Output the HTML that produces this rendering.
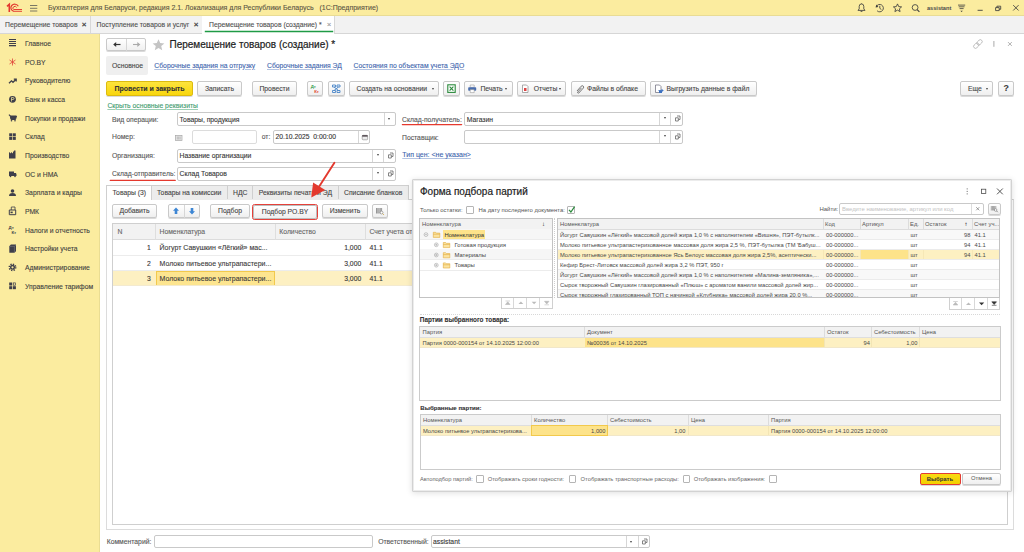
<!DOCTYPE html>
<html><head><meta charset="utf-8">
<style>
*{box-sizing:border-box;margin:0;padding:0}
html,body{width:1024px;height:552px;overflow:hidden;background:#fff;font-family:"Liberation Sans",sans-serif;color:#4d4d4d;-webkit-text-stroke-width:0.1px}
.a{position:absolute}
.t{position:absolute;white-space:nowrap;font-family:"Liberation Sans",sans-serif}
#top{left:0;top:0;width:1024px;height:16px;background:#fbec9f;border-bottom:1px solid #e9dc95}
#tabs{left:0;top:16px;width:1024px;height:18px;background:#f2f2f2;border-bottom:1px solid #d6d6d6}
#side{left:0;top:34px;width:100px;height:518px;background:#fbec9f}
.si{font-size:6.8px;color:#404040;left:25px;height:10px;line-height:10px}
.sic{position:absolute;left:9px}
.btn{position:absolute;border:1px solid #c9c9c9;border-radius:2px;background:linear-gradient(#fff,#efefef);box-shadow:0 1px 0 #dadada;font-size:6.8px;color:#444;text-align:center;white-space:nowrap}
.fld{position:absolute;border:1px solid #c9c9c9;border-radius:2px;background:#fff}
.lbl{font-size:6.8px;color:#555;height:10px;line-height:10px}
.lnk{color:#3b63ad;text-decoration:underline;text-decoration-color:#b4c4e2}
.dv{position:absolute;top:0;bottom:0;width:1px;background:#d6d6d6}
.dd{position:absolute;width:0;height:0;border-left:1.8px solid transparent;border-right:1.8px solid transparent;border-top:2.2px solid #444}
</style></head><body>
<!-- TOP BAR -->
<div id="top" class="a"></div>
<svg class="a" style="left:0;top:0" width="24" height="16" viewBox="0 0 24 16">
  <path d="M9.3 11.9 V4.3 L7 6.4" stroke="#e3382f" stroke-width="1.6" fill="none"/>
  <path d="M18.3 6.3 A3.9 3.6 0 1 0 13.8 11.3" stroke="#e3382f" stroke-width="1.2" fill="none"/>
  <path d="M16.6 7.4 A1.9 1.7 0 1 0 13.8 9.5" stroke="#e3382f" stroke-width="1" fill="none"/>
  <path d="M13.6 9.5 H22 M13.6 11.3 H22" stroke="#e3382f" stroke-width="0.95"/>
</svg>
<svg class="a" style="left:30px;top:5px" width="8" height="7" viewBox="0 0 8 7">
  <path d="M0 0.5H7.3M0 3.3H7.3M0 6H7.3" stroke="#6b6b5e" stroke-width="0.9"/>
</svg>
<div class="t" style="left:48px;top:3px;font-size:7px;line-height:10px;color:#5a5443">Бухгалтерия для Беларуси, редакция 2.1. Локализация для Республики Беларусь&nbsp;&nbsp;&nbsp;(1С:Предприятие)</div>
<!-- top right icons -->
<svg class="a" style="left:850px;top:0" width="174" height="16" viewBox="850 0 174 16">
 <g stroke="#3d3d3d" fill="none" stroke-width="0.85">
  <path d="M858 10.4 L859.2 8.9 V6.4 A2.3 2.5 0 0 1 863.8 6.4 V8.9 L865 10.4 Z"/><path d="M861.5 3.6 V4.1 M860.6 11.4 H862.4"/>
  <path d="M876.4 6.4 A3.7 3.7 0 1 1 877.1 10.8"/><path d="M879.8 5.8 V8.3 L881.4 9.6"/>
  <path d="M897.5 3.9 L898.7 6.6 L901.6 6.9 L899.4 8.8 L900.1 11.6 L897.5 10.1 L894.9 11.6 L895.6 8.8 L893.4 6.9 L896.3 6.6 Z"/>
  <circle cx="915.1" cy="7.5" r="2.9"/><path d="M917.2 9.6 L919.4 11.8" stroke-width="1.1"/>
  <path d="M958 5.1 H965.2 M958.7 6.8 H964.5 M959.6 8.6 H963.6" stroke-width="0.8"/>
  <path d="M977.6 10.3 H982.7" stroke-width="0.9"/>
  <path d="M995.6 7.6 H999.2 V10.6 H995.6 Z M996.9 7.6 V6.2 H1000.7 V9.3 H999.2"/>
  <path d="M1013.2 5.1 L1018.6 10.5 M1018.6 5.1 L1013.2 10.5"/>
 </g>
 <path d="M876.4 4.6 L875.6 7.4 L878.3 6.9 Z" fill="#3d3d3d"/>
 <path d="M960.4 10.8 H962.8 L961.6 12 Z" fill="#3d3d3d"/>
</svg>
<div class="t" style="left:927px;top:3px;font-size:5.6px;-webkit-text-stroke-width:0px;font-weight:700;line-height:10px;color:#4a4a4a">assistant</div>

<!-- TABS -->
<div id="tabs" class="a"></div>
<div class="a" style="left:90px;top:16px;width:1px;height:17px;background:#d8d8d8"></div>
<div class="a" style="left:202px;top:16px;width:1px;height:17px;background:#d8d8d8"></div>
<div class="a" style="left:202px;top:16px;width:133px;height:18px;background:#fff;border-right:1px solid #d8d8d8"></div>
<svg class="a" style="left:200px;top:28px" width="140" height="6" viewBox="200 28 140 6"><path d="M204.8 31.5 H333.2" stroke="#1f9a45" stroke-width="1.4"/></svg>
<div class="t" style="left:5px;top:20px;font-size:6.8px;line-height:10px;color:#4f4f4f">Перемещение товаров</div>
<div class="t" style="left:81.8px;top:19.8px;font-size:8px;font-weight:700;line-height:10px;color:#444">×</div>
<div class="t" style="left:96.5px;top:20px;font-size:6.8px;line-height:10px;color:#4f4f4f">Поступление товаров и услуг</div>
<div class="t" style="left:193.8px;top:19.8px;font-size:8px;font-weight:700;line-height:10px;color:#444">×</div>
<div class="t" style="left:209px;top:20px;font-size:6.8px;line-height:10px;color:#4f4f4f">Перемещение товаров (создание) *</div>
<div class="t" style="left:326.8px;top:19.8px;font-size:8px;line-height:10px;color:#999">×</div>

<!-- SIDEBAR -->
<div id="side" class="a"></div>
<div class="a" style="left:99px;top:34px;width:1px;height:518px;background:#eadd93"></div>
<div class="t si" style="top:39.1px">Главное</div>
<div class="t si" style="top:57.8px">РО.BY</div>
<div class="t si" style="top:76.4px">Руководителю</div>
<div class="t si" style="top:95.1px">Банк и касса</div>
<div class="t si" style="top:113.7px">Покупки и продажи</div>
<div class="t si" style="top:132.4px">Склад</div>
<div class="t si" style="top:151.0px">Производство</div>
<div class="t si" style="top:169.7px">ОС и НМА</div>
<div class="t si" style="top:188.3px">Зарплата и кадры</div>
<div class="t si" style="top:207.0px">РМК</div>
<div class="t si" style="top:225.6px">Налоги и отчетность</div>
<div class="t si" style="top:244.3px">Настройки учета</div>
<div class="t si" style="top:262.9px">Администрирование</div>
<div class="t si" style="top:281.6px">Управление тарифом</div>
<svg class="a" style="left:0;top:34px" width="100" height="260" viewBox="0 34 100 260">
 <g fill="#3f3f4a">
  <rect x="9" y="39" width="7" height="1"/><rect x="9" y="41" width="7" height="1"/><rect x="9" y="43" width="7" height="1"/><rect x="9" y="45" width="7" height="1.3"/>
 </g>
 <g stroke="#e0443a" stroke-width="0.8" fill="none"><path d="M12.5 58.5 V65.5 M9.5 60 L15.5 64 M15.5 60 L9.5 64"/></g>
 <path d="M9 83.3 L11.5 80.8 L13 82.3 L15.8 79.5 M13.8 79.2 H16.2 V81.6" stroke="#3f3f4a" stroke-width="1.3" fill="none"/>
 <circle cx="12.5" cy="99.3" r="3.4" fill="#3f3f4a"/><path d="M11.5 101.5 V97.5 H13 A1 1 0 0 1 13 99.5 H11.5" stroke="#fbec9f" stroke-width="0.7" fill="none"/>
 <path d="M8.8 115 H10 L11 119.5 H15.5 L16.5 116 H10.5" stroke="#3f3f4a" stroke-width="1" fill="#3f3f4a"/><circle cx="11.5" cy="120.8" r="0.8" fill="#3f3f4a"/><circle cx="15" cy="120.8" r="0.8" fill="#3f3f4a"/>
 <g fill="#3f3f4a"><rect x="9.2" y="133.3" width="3" height="3"/><rect x="12.8" y="133.3" width="3" height="3"/><rect x="9.2" y="136.9" width="3" height="3"/><rect x="12.8" y="136.9" width="3" height="3"/></g>
 <path d="M9 158.5 V152 L11 153.5 V152 L13 153.5 V151.5 H14 V150.5 H15.5 V158.5 Z" fill="#3f3f4a"/>
 <path d="M9 171.5 H14 V176 H9 Z M14 173 H16 L16.5 174.5 V176 H14 Z" fill="#3f3f4a"/><circle cx="10.5" cy="176.5" r="0.8" fill="#3f3f4a"/><circle cx="15" cy="176.5" r="0.8" fill="#3f3f4a"/>
 <circle cx="12.5" cy="191" r="1.8" fill="#3f3f4a"/><path d="M9 196 Q9 193 12.5 193 Q16 193 16 196 Z" fill="#3f3f4a"/>
 <path d="M9.3 210 H15.7 V214.7 H9.3 Z" stroke="#3f3f4a" stroke-width="1" fill="none"/><path d="M11.3 210 V207 H15 V210" stroke="#3f3f4a" stroke-width="0.8" fill="none"/><rect x="10.5" y="211.6" width="2.2" height="1.6" fill="#3f3f4a"/>
 <text x="8.6" y="229.3" font-size="4.4" font-family="Liberation Sans" fill="#3f3f4a" font-weight="700">Дт</text><text x="11.4" y="234" font-size="4.4" font-family="Liberation Sans" fill="#3f3f4a" font-weight="700">Кт</text>
 <path d="M9.3 246.2 L10.9 244.6 H16 V251.2 L14.4 252.8 H9.3 Z" fill="#3f3f4a"/><path d="M9.3 246.4 H14.4 V252.8 M14.4 246.4 L16 244.8" stroke="#8a8a8f" stroke-width="0.45" fill="none"/>
 <circle cx="12.5" cy="267.3" r="3.2" stroke="#3f3f4a" stroke-width="1.5" fill="none" stroke-dasharray="1.3 1.213"/><circle cx="12.5" cy="267.3" r="2.5" fill="#3f3f4a"/><circle cx="12.5" cy="267.3" r="1.1" fill="#fbec9f"/>
 <g fill="#3f3f4a"><rect x="9.2" y="282.5" width="3" height="3"/><rect x="9.2" y="286.2" width="3" height="3"/><rect x="12.9" y="286.2" width="3" height="3"/></g><rect x="13.3" y="282.9" width="2.3" height="2.3" stroke="#3f3f4a" stroke-width="0.7" fill="none"/>
</svg>

<!-- MAIN FORM HEADER -->
<div class="a" style="left:106px;top:38px;width:40px;height:13px;border:1px solid #c9c9c9;border-radius:2px;background:linear-gradient(#fff,#f0f0f0);box-shadow:0 1px 0 #dadada"></div>
<div class="a" style="left:126px;top:39px;width:1px;height:12px;background:#d6d6d6"></div>
<svg class="a" style="left:106px;top:38px" width="41" height="13" viewBox="0 0 41 13">
 <path d="M8 6.5 H14.5" stroke="#333" stroke-width="1.2"/><path d="M7.2 6.5 L10.2 4 V9 Z" fill="#333"/>
 <path d="M27 6.5 H33.5" stroke="#aaa" stroke-width="1.1"/><path d="M34.3 6.5 L31.3 4 V9 Z" fill="#aaa"/>
</svg>
<svg class="a" style="left:152px;top:38.5px" width="13" height="12" viewBox="0 0 13 12">
 <path d="M6.5 0.3 L8.2 4.1 L12.4 4.4 L9.2 7.1 L10.2 11.3 L6.5 9.1 L2.8 11.3 L3.8 7.1 L0.6 4.4 L4.8 4.1 Z" fill="#c4c4c4"/>
</svg>
<div class="t" style="left:169.5px;top:38.2px;font-size:10px;line-height:13px;color:#222;-webkit-text-stroke-width:0.2px">Перемещение товаров (создание) *</div>
<svg class="a" style="left:970px;top:39px" width="45" height="10" viewBox="0 0 45 10">
 <g stroke="#b5b5b5" stroke-width="0.9" fill="none">
  <g transform="rotate(-45 7.9 5)" stroke-width="0.85"><rect x="2.6" y="3.1" width="6" height="3.8" rx="1.9"/><rect x="7.2" y="3.1" width="6" height="3.8" rx="1.9"/></g>
  <path d="M38 3.1 L41.8 6.9 M41.8 3.1 L38 6.9" stroke="#a8a8a8"/>
 </g>
 <path d="M23.9 2 V7.8" stroke="#a5a5a5" stroke-width="0.95"/>
</svg>

<div class="a" style="left:106px;top:56px;width:42px;height:19px;background:#efefef;border-radius:2px"></div>
<div class="t" style="left:112px;top:60.5px;font-size:6.8px;line-height:10px;color:#444">Основное</div>
<div class="t lnk" style="left:154.3px;top:60.5px;font-size:6.8px;line-height:10px">Сборочные задания на отгрузку</div>
<div class="t lnk" style="left:267px;top:60.5px;font-size:6.8px;line-height:10px">Сборочные задания ЭД</div>
<div class="t lnk" style="left:353.5px;top:60.5px;font-size:6.8px;line-height:10px">Состояния по объектам учета ЭДО</div>

<!-- COMMAND BAR -->
<div class="btn" style="left:106px;top:81px;width:87px;height:15px;line-height:13.8px;background:linear-gradient(#fde43c,#f8d60e);border-color:#dcbb10;color:#333;font-weight:700;font-size:7px">Провести и закрыть</div>
<div class="btn" style="left:197px;top:81px;width:45px;height:15px;line-height:13.8px">Записать</div>
<div class="btn" style="left:252px;top:81px;width:45px;height:15px;line-height:13.8px">Провести</div>
<div class="btn" style="left:307px;top:81px;width:16px;height:15px"></div>
<div class="btn" style="left:328px;top:81px;width:17px;height:15px"></div>
<div class="btn" style="left:349px;top:81px;width:90px;height:15px;line-height:13.8px;text-align:left;padding-left:6.5px">Создать на основании</div>
<div class="dd" style="left:431.8px;top:88px"></div>
<div class="btn" style="left:443px;top:81px;width:17px;height:15px"></div>
<div class="btn" style="left:464px;top:81px;width:49px;height:15px;line-height:13.8px;text-align:left;padding-left:15.4px">Печать</div>
<div class="dd" style="left:505.2px;top:88px"></div>
<div class="btn" style="left:517px;top:81px;width:49px;height:15px;line-height:13.8px;text-align:left;padding-left:15.8px">Отчеты</div>
<div class="dd" style="left:559.3px;top:88px"></div>
<div class="btn" style="left:571px;top:81px;width:75px;height:15px;line-height:13.8px;text-align:left;padding-left:15px">Файлы в облаке</div>
<div class="btn" style="left:650px;top:81px;width:107px;height:15px;line-height:13.8px;text-align:left;padding-left:15.5px">Выгрузить данные в файл</div>
<div class="btn" style="left:960px;top:81px;width:33px;height:15px;line-height:13.8px;text-align:left;padding-left:7px">Еще</div>
<div class="dd" style="left:985.5px;top:88px"></div>
<div class="btn" style="left:998px;top:81px;width:16px;height:15px;line-height:13.6px;font-weight:700;font-size:8.8px;color:#3a3a3a;padding-left:0.5px">?</div>
<svg class="a" style="left:300px;top:81px" width="470" height="16" viewBox="300 81 470 16">
 <text x="310.8" y="88" font-size="4.3" font-family="Liberation Sans" font-weight="700" fill="#2e9a4c" stroke="none">Дт</text>
 <text x="314.2" y="92.6" font-size="4.3" font-family="Liberation Sans" font-weight="700" fill="#e03a2e" stroke="none">Кт</text>
 <g stroke="#4a86c8" stroke-width="0.9" fill="none"><path d="M332.5 85 H335.5 V87 H332.5 Z M337 85 H340 V87 H337 Z M332.5 90.5 H335.5 V92.5 H332.5 Z M337 90.5 H340 V92.5 H337 Z M334 87 L338.5 90.5 M338.5 87 L334 90.5"/></g>
 <rect x="447.8" y="84.8" width="7.4" height="7.6" fill="#fff" stroke="#2b8a3c" stroke-width="1.1"/>
 <path d="M449.6 86.6 L453.4 90.6 M453.4 86.6 L449.6 90.6" stroke="#2b8a3c" stroke-width="1.1"/>
 <path d="M470.2 85 H474.2 V87.3 H470.2 Z" fill="#fff" stroke="#888" stroke-width="0.5"/><rect x="468.2" y="87.2" width="8" height="3.6" rx="0.8" fill="#4a6eae"/><path d="M470.2 89.6 H474.2 V92.6 H470.2 Z" fill="#fff" stroke="#888" stroke-width="0.5"/>
 <path d="M522.5 85 H526.5 L528 86.5 V92.5 H522.5 Z" fill="#fff" stroke="#888" stroke-width="0.7"/><rect x="524" y="88" width="2.5" height="3" fill="#d44"/>
 <path d="M577 91 L581.2 86.2 A1.4 1.4 0 0 1 583.3 88.1 L578.8 93 A0.7 0.7 0 0 1 577.8 92 L581.5 87.8" stroke="#666" stroke-width="0.9" fill="none"/>
 <path d="M655.5 85 H659.5 L661 86.5 V92.5 H655.5 Z" fill="#fff" stroke="#667" stroke-width="0.7"/><path d="M658.5 90.5 H663 M661.5 89 L663 90.5 L661.5 92" stroke="#3a6fc0" stroke-width="0.9" fill="none"/><rect x="659" y="91" width="3" height="2" fill="#3a6fc0"/>
</svg>

<!-- HEADER FIELDS -->
<div class="t lnk" style="left:107.4px;top:100.7px;font-size:6.8px;line-height:10px;color:#3d9a6e;text-decoration-color:#9dcfb5">Скрыть основные реквизиты</div>
<div class="t lbl" style="left:112px;top:114.8px">Вид операции:</div>
<div class="fld" style="left:177px;top:112px;width:219px;height:14px"><div class="dv" style="left:206px"></div><div class="dd" style="left:210px;top:5px"></div></div>
<div class="t" style="left:179.5px;top:114.5px;font-size:6.8px;line-height:10px;color:#333">Товары, продукция</div>
<div class="t lbl" style="left:112px;top:132px">Номер:</div>
<svg class="a" style="left:175px;top:135px" width="8" height="6" viewBox="0 0 8 6"><rect x="0.4" y="0.4" width="6.6" height="5.2" fill="#e6e6e6" stroke="#a8a8a8" stroke-width="0.7"/><path d="M2.3 1.5 V4.5 M3.7 1.5 V4.5 M5.1 1.5 V4.5" stroke="#aaa" stroke-width="0.7"/></svg>
<div class="fld" style="left:192px;top:130px;width:65px;height:14px;border-color:#dcdcdc"></div>
<div class="t lbl" style="left:261.7px;top:132px">от:</div>
<div class="fld" style="left:273px;top:130px;width:97px;height:14px"><div class="dv" style="left:84px"></div><svg class="a" style="left:86.5px;top:2.5px" width="8" height="7" viewBox="0 0 8 7"><rect x="1.2" y="1.3" width="5.4" height="4.5" rx="0.9" fill="#ececec" stroke="#888" stroke-width="0.6"/><rect x="1.2" y="1.2" width="5.4" height="1.4" fill="#4a4046"/></svg></div>
<div class="t" style="left:275.5px;top:132px;font-size:6.8px;line-height:10px;color:#333">20.10.2025&nbsp;&nbsp;0:00:00</div>
<div class="t lbl" style="left:112px;top:150.5px">Организация:</div>
<div class="fld" style="left:177px;top:149px;width:219px;height:14px"><div class="dv" style="left:194px"></div><div class="dv" style="left:205px"></div><div class="dd" style="left:199px;top:4px"></div><svg class="a" style="left:208.5px;top:2px" width="7" height="7" viewBox="0 0 7 7"><path d="M3 1 H6 V4.5 H4.5" fill="none" stroke="#666" stroke-width="0.8"/><path d="M1.5 2.8 H4.3 V6 H1.5 Z" fill="none" stroke="#666" stroke-width="0.8"/></svg></div>
<div class="t" style="left:179.5px;top:150.5px;font-size:6.8px;line-height:10px;color:#333">Название организации</div>
<div class="t lbl" style="left:112px;top:168.5px">Склад-отправитель:</div>
<svg class="a" style="left:105px;top:176px" width="80" height="8" viewBox="105 176 80 8"><path d="M110.3 180.4 H175.2" stroke="#e5392e" stroke-width="1.35" stroke-linecap="round"/></svg>
<div class="fld" style="left:177px;top:167px;width:219px;height:14px"><div class="dv" style="left:194px"></div><div class="dv" style="left:205px"></div><div class="dd" style="left:199px;top:4px"></div><svg class="a" style="left:208.5px;top:2px" width="7" height="7" viewBox="0 0 7 7"><path d="M3 1 H6 V4.5 H4.5" fill="none" stroke="#666" stroke-width="0.8"/><path d="M1.5 2.8 H4.3 V6 H1.5 Z" fill="none" stroke="#666" stroke-width="0.8"/></svg></div>
<div class="t" style="left:179.5px;top:168.5px;font-size:6.8px;line-height:10px;color:#333">Склад Товаров</div>

<div class="t lbl" style="left:402px;top:114.6px">Склад-получатель:</div>
<svg class="a" style="left:398px;top:120px" width="70" height="8" viewBox="398 120 70 8"><path d="M402.4 124.6 H461.6" stroke="#e5392e" stroke-width="1.35" stroke-linecap="round"/></svg>
<div class="fld" style="left:464px;top:112px;width:219px;height:14px"><div class="dv" style="left:194px"></div><div class="dv" style="left:205px"></div><div class="dd" style="left:199px;top:4px"></div><svg class="a" style="left:209px;top:2px" width="7" height="7" viewBox="0 0 7 7"><path d="M3 1 H6 V4.5 H4.5" fill="none" stroke="#666" stroke-width="0.8"/><path d="M1.5 2.8 H4.3 V6 H1.5 Z" fill="none" stroke="#666" stroke-width="0.8"/></svg></div>
<div class="t" style="left:466.8px;top:114.5px;font-size:6.8px;line-height:10px;color:#333">Магазин</div>
<div class="t lbl" style="left:402px;top:132.8px">Поставщик:</div>
<div class="fld" style="left:464px;top:130px;width:219px;height:14px"><div class="dv" style="left:194px"></div><div class="dv" style="left:205px"></div><div class="dd" style="left:199px;top:4px"></div><svg class="a" style="left:209px;top:2px" width="7" height="7" viewBox="0 0 7 7"><path d="M3 1 H6 V4.5 H4.5" fill="none" stroke="#666" stroke-width="0.8"/><path d="M1.5 2.8 H4.3 V6 H1.5 Z" fill="none" stroke="#666" stroke-width="0.8"/></svg></div>
<div class="t lnk" style="left:402.3px;top:150px;font-size:7px;line-height:10px">Тип цен: &lt;не указан&gt;</div>

<!-- TABS PANEL -->
<div class="a" style="left:106px;top:199px;width:908px;height:331px;border:1px solid #dcdcdc;border-top:1px solid #cfcfcf"></div>
<div class="a" style="left:151px;top:185px;width:258px;height:15px;background:#ececec;border:1px solid #cfcfcf;border-bottom:none"></div>
<div class="a" style="left:227px;top:186px;width:1px;height:13px;background:#cfcfcf"></div>
<div class="a" style="left:252px;top:186px;width:1px;height:13px;background:#cfcfcf"></div>
<div class="a" style="left:338px;top:186px;width:1px;height:13px;background:#cfcfcf"></div>
<div class="a" style="left:106px;top:185px;width:46px;height:15px;background:#fff;border:1px solid #cfcfcf;border-bottom:none"></div>
<div class="t" style="left:112.5px;top:187.7px;font-size:6.8px;line-height:10px;color:#444">Товары (3)</div>
<div class="t" style="left:157px;top:187.7px;font-size:6.8px;line-height:10px;color:#444">Товары на комиссии</div>
<div class="t" style="left:233px;top:187.7px;font-size:6.8px;line-height:10px;color:#444">НДС</div>
<div class="t" style="left:258.7px;top:187.7px;font-size:6.8px;line-height:10px;color:#444">Реквизиты печати и ЭД</div>
<div class="t" style="left:344px;top:187.7px;font-size:6.8px;line-height:10px;color:#444">Списание бланков</div>

<div class="btn" style="left:112px;top:204px;width:45px;height:14px;line-height:11.3px">Добавить</div>
<div class="btn" style="left:168px;top:204px;width:32px;height:14px"></div>
<div class="a" style="left:184px;top:205px;width:1px;height:13px;background:#d6d6d6"></div>
<svg class="a" style="left:168px;top:204px" width="32" height="14" viewBox="0 0 32 14">
 <path d="M8 3.5 L11 6.8 H9.3 V10 H6.7 V6.8 H5 Z" fill="#3d86d4"/>
 <path d="M24 10.5 L27 7.2 H25.3 V4 H22.7 V7.2 H21 Z" fill="#3d86d4"/>
</svg>
<div class="btn" style="left:210px;top:204px;width:40px;height:14px;line-height:11.3px">Подбор</div>
<div class="btn" style="left:253px;top:205px;width:64px;height:14px;line-height:11.3px;border-color:#bdbdbd">Подбор РО.BY</div>
<div class="a" style="left:252px;top:204px;width:66px;height:16px;border:1.7px solid #e5413a;border-radius:2.5px"></div>
<div class="btn" style="left:322px;top:204px;width:46px;height:14px;line-height:11.3px">Изменить</div>
<div class="btn" style="left:372px;top:204px;width:16px;height:14px"></div>
<svg class="a" style="left:375px;top:207px" width="10" height="9" viewBox="0 0 10 9"><path d="M1.5 1 V6.5 M2.8 1 V6.5 M4 1 V6.5 M5.3 1 V6.5 M6.6 1 V4" stroke="#555" stroke-width="0.6"/><circle cx="6.6" cy="5.6" r="1.4" fill="#fff" stroke="#777" stroke-width="0.6"/><path d="M7.6 6.6 L8.8 7.8" stroke="#c9a23a" stroke-width="0.9"/></svg>

<!-- MAIN TABLE -->
<div class="a" style="left:112px;top:223px;width:896px;height:302px;border:1px solid #cfcfcf;background:#fff"></div>
<div class="a" style="left:113px;top:224px;width:894px;height:16px;background:#f2f2f2;border-bottom:1px solid #dcdcdc"></div>
<div class="a" style="left:155px;top:224px;width:1px;height:16px;background:#dedede"></div>
<div class="a" style="left:275px;top:224px;width:1px;height:16px;background:#dedede"></div>
<div class="a" style="left:365px;top:224px;width:1px;height:16px;background:#dedede"></div>
<div class="t" style="left:117.5px;top:226.8px;font-size:6.8px;line-height:10px;color:#666">N</div>
<div class="t" style="left:159.5px;top:226.8px;font-size:6.8px;line-height:10px;color:#666">Номенклатура</div>
<div class="t" style="left:279.3px;top:226.8px;font-size:6.8px;line-height:10px;color:#666">Количество</div>
<div class="t" style="left:369.5px;top:226.8px;font-size:6.8px;line-height:10px;color:#666">Счет учета от</div>
<div class="a" style="left:113px;top:255px;width:894px;height:1px;background:#ececec"></div>
<div class="a" style="left:113px;top:270px;width:894px;height:1px;background:#ececec"></div>
<div class="a" style="left:113px;top:271px;width:894px;height:14px;background:#fdf0c2"></div>
<div class="a" style="left:156px;top:271px;width:119px;height:15px;background:#fde58f;border:1px solid #f2c94c"></div>
<div class="a" style="left:113px;top:285px;width:894px;height:1px;background:#f3ead0"></div>
<div class="t" style="left:147px;top:243.1px;font-size:6.8px;line-height:10px;color:#333">1</div>
<div class="t" style="left:159.5px;top:243.1px;font-size:7px;line-height:10px;color:#3a3a3a">Йогурт Савушкин «Лёгкий» мас...</div>
<div class="t" style="left:344.2px;top:243.1px;font-size:6.8px;line-height:10px;color:#333">1,000</div>
<div class="t" style="left:369.5px;top:243.1px;font-size:6.8px;line-height:10px;color:#333">41.1</div>
<div class="t" style="left:147px;top:258.8px;font-size:6.8px;line-height:10px;color:#333">2</div>
<div class="t" style="left:159.5px;top:258.8px;font-size:7px;line-height:10px;color:#3a3a3a">Молоко питьевое ультрапастери...</div>
<div class="t" style="left:344.2px;top:258.8px;font-size:6.8px;line-height:10px;color:#333">3,000</div>
<div class="t" style="left:369.5px;top:258.8px;font-size:6.8px;line-height:10px;color:#333">41.1</div>
<div class="t" style="left:147px;top:274px;font-size:6.8px;line-height:10px;color:#333">3</div>
<div class="t" style="left:159.5px;top:274px;font-size:7px;line-height:10px;color:#3a3a3a">Молоко питьевое ультрапастери...</div>
<div class="t" style="left:344.2px;top:274px;font-size:6.8px;line-height:10px;color:#333">3,000</div>
<div class="t" style="left:369.5px;top:274px;font-size:6.8px;line-height:10px;color:#333">41.1</div>

<!-- FOOTER -->
<div class="t lbl" style="left:106.7px;top:536.5px">Комментарий:</div>
<div class="fld" style="left:154px;top:535px;width:219px;height:13px"></div>
<div class="t lbl" style="left:378.2px;top:536.5px">Ответственный:</div>
<div class="fld" style="left:431px;top:535px;width:219px;height:13px"><div class="dv" style="left:194px"></div><div class="dv" style="left:206px"></div><div class="dd" style="left:198px;top:5px"></div><svg class="a" style="left:209px;top:2px" width="7" height="7" viewBox="0 0 7 7"><path d="M3 1 H6 V4.5 H4.5" fill="none" stroke="#666" stroke-width="0.8"/><path d="M1.5 2.8 H4.3 V6 H1.5 Z" fill="none" stroke="#666" stroke-width="0.8"/></svg></div>
<div class="t" style="left:433px;top:536.5px;font-size:6.8px;line-height:10px;color:#333">assistant</div>


<!-- MODAL -->
<div class="a" style="left:412px;top:179px;width:600px;height:313px;background:#fff;border:1px solid #d2d2d2;border-radius:1px;box-shadow:inset 1px 1px 0 #ececec,inset -1px -1px 0 #ececec,0 1px 6px rgba(0,0,0,0.13)"></div>
<div class="t" style="left:420px;top:184.5px;font-size:10px;line-height:13px;color:#222;-webkit-text-stroke-width:0.2px">Форма подбора партий</div>
<svg class="a" style="left:960px;top:185px" width="48" height="12" viewBox="960 185 48 12">
 <path d="M967.2 188.4 V189.4 M967.2 190.9 V191.9 M967.2 193.4 V194.4" stroke="#555" stroke-width="0.9"/>
 <rect x="981.6" y="189.2" width="4.2" height="4.4" fill="none" stroke="#444" stroke-width="0.75"/>
 <path d="M997 188.5 L1002.8 194.3 M1002.8 188.5 L997 194.3" stroke="#444" stroke-width="0.9"/>
</svg>
<div class="t" style="left:420px;top:204.5px;font-size:5.9px;-webkit-text-stroke-width:0px;line-height:10px;color:#555">Только остатки:</div>
<div class="a" style="left:466px;top:206px;width:8px;height:8px;border:0.8px solid #b5b5b5;border-radius:1px;background:#fff"></div>
<div class="t" style="left:478.5px;top:204.5px;font-size:5.9px;-webkit-text-stroke-width:0px;line-height:10px;color:#555">На дату последнего документа:</div>
<div class="a" style="left:567px;top:206px;width:8px;height:8px;border:0.8px solid #b5b5b5;border-radius:1px;background:#fff"></div>
<svg class="a" style="left:566px;top:204px" width="11" height="11" viewBox="0 0 11 11"><path d="M3 5.8 L4.9 8 L8.6 2.6" stroke="#27893a" stroke-width="1.2" fill="none"/></svg>
<div class="t" style="left:819.4px;top:204px;font-size:6px;-webkit-text-stroke-width:0px;line-height:10px;color:#555">Найти:</div>
<div class="fld" style="left:839px;top:203px;width:145px;height:12px"><div class="dv" style="left:131px;background:#ddd"></div></div>
<div class="t" style="left:842px;top:204px;font-size:5.9px;-webkit-text-stroke-width:0px;line-height:10px;color:#c3c3c3">Введите наименование, артикул или код</div>
<svg class="a" style="left:975px;top:206px" width="6" height="6" viewBox="0 0 6 6"><path d="M1.2 1.2 L4.3 4.3 M4.3 1.2 L1.2 4.3" stroke="#777" stroke-width="0.7"/></svg>
<div class="btn" style="left:988px;top:203px;width:13px;height:12px"></div>
<svg class="a" style="left:990px;top:205px" width="9" height="8" viewBox="0 0 9 8"><path d="M1.3 1 V5.5 M2.5 1 V5.5 M3.5 1 V5.5 M4.6 1 V5.5 M5.8 1 V3.8" stroke="#666" stroke-width="0.55"/><circle cx="5.6" cy="5" r="1.3" fill="#fff" stroke="#777" stroke-width="0.6"/><path d="M6.5 5.9 L7.8 7.2" stroke="#777" stroke-width="0.8"/></svg>

<!-- tree -->
<div class="a" style="left:419px;top:218px;width:134px;height:80px;border:1px solid #c3c3c3;background:#fff"></div>
<div class="a" style="left:420px;top:219px;width:132px;height:11px;background:#f2f2f2;border-bottom:1px solid #dcdcdc"></div>
<div class="t" style="left:422px;top:219.3px;font-size:5.8px;-webkit-text-stroke-width:0px;line-height:10px;color:#555">Номенклатура</div>
<div class="t" style="left:542px;top:219px;font-size:6px;line-height:10px;color:#555">↓</div>
<div class="a" style="left:420px;top:229px;width:132px;height:11px;background:#f6f6f6;border-bottom:1px solid #ececec"></div>
<div class="a" style="left:420px;top:239px;width:132px;height:11px;border-bottom:1px solid #ececec"></div>
<div class="a" style="left:420px;top:249px;width:132px;height:11px;background:#f6f6f6;border-bottom:1px solid #ececec"></div>
<div class="a" style="left:420px;top:260px;width:132px;height:11px;border-bottom:1px solid #ececec"></div>
<div class="a" style="left:443px;top:230px;width:42px;height:9px;background:#fde38a"></div>
<svg class="a" style="left:420px;top:229px" width="40" height="42" viewBox="420 229 40 42">
 <g fill="none" stroke="#9c9c9c" stroke-width="0.55">
  <circle cx="426" cy="234.6" r="1.9"/><path d="M424.9 234.6 H427.1"/>
  <circle cx="436.3" cy="244.8" r="1.9"/><path d="M435.2 244.8 H437.4 M436.3 243.7 V245.9"/>
  <circle cx="436.3" cy="255" r="1.9"/><path d="M435.2 255 H437.4 M436.3 253.9 V256.1"/>
  <circle cx="436.3" cy="265.2" r="1.9"/><path d="M435.2 265.2 H437.4 M436.3 264.1 V266.3"/>
 </g>
 <g fill="#fbe3a0" stroke="#e0a93a" stroke-width="0.6">
  <path d="M433.3 232.3 H435.6 L436.4 233.1 H439.8 V237.4 H433.3 Z"/><path d="M433.3 234.2 H439.8" fill="none"/>
  <path d="M443.3 242.5 H445.6 L446.4 243.3 H449.8 V247.6 H443.3 Z"/><path d="M443.3 244.4 H449.8" fill="none"/>
  <path d="M443.3 252.7 H445.6 L446.4 253.5 H449.8 V257.8 H443.3 Z"/><path d="M443.3 254.6 H449.8" fill="none"/>
  <path d="M443.3 262.9 H445.6 L446.4 263.7 H449.8 V268 H443.3 Z"/><path d="M443.3 264.8 H449.8" fill="none"/>
 </g>
</svg>
<div class="t" style="left:444.5px;top:229.8px;font-size:5.9px;-webkit-text-stroke-width:0px;line-height:10px;color:#333">Номенклатура</div>
<div class="t" style="left:454.5px;top:239.8px;font-size:5.9px;-webkit-text-stroke-width:0px;line-height:10px;color:#444">Готовая продукция</div>
<div class="t" style="left:454.5px;top:250px;font-size:5.9px;-webkit-text-stroke-width:0px;line-height:10px;color:#444">Материалы</div>
<div class="t" style="left:454.5px;top:260.2px;font-size:5.9px;-webkit-text-stroke-width:0px;line-height:10px;color:#444">Товары</div>
<div class="a" style="left:501px;top:298px;width:52px;height:11px;border:1px solid #d0d0d0;border-top:none;background:#fff"></div>
<div class="a" style="left:513px;top:298px;width:1px;height:10px;background:#d8d8d8"></div>
<div class="a" style="left:526px;top:298px;width:1px;height:10px;background:#d8d8d8"></div>
<div class="a" style="left:539px;top:298px;width:1px;height:10px;background:#d8d8d8"></div>
<svg class="a" style="left:501px;top:297px" width="52" height="12" viewBox="0 0 52 12">
 <g fill="#bbb"><path d="M4.5 4 H9 M6.75 4.8 L4.5 7.5 H9 Z" stroke="#bbb" stroke-width="0.6"/><path d="M17.5 7 L19.9 4.5 L22.3 7 Z"/><path d="M30.7 4.8 L33.1 7.3 L35.5 4.8 Z"/><path d="M43.5 4.3 H48 L45.75 7 Z M43.5 7.8 H48" stroke="#bbb" stroke-width="0.6"/></g>
</svg>
<div class="a" style="left:554px;top:218px;width:0;height:80px;border-left:1px dotted #cfcfcf"></div>

<!-- list -->
<div class="a" style="left:557px;top:218px;width:443px;height:80px;border:1px solid #c3c3c3;background:#fff;overflow:hidden">
 <div class="a" style="left:0;top:0;width:441px;height:11px;background:#f2f2f2;border-bottom:1px solid #dcdcdc"></div>
 <div class="t" style="left:2px;top:0.3px;font-size:5.8px;-webkit-text-stroke-width:0px;line-height:10px;color:#555">Номенклатура</div>
 <div class="a" style="left:265px;top:0;width:1px;height:10px;background:#dcdcdc"></div>
 <div class="t" style="left:267.1px;top:0.3px;font-size:5.8px;-webkit-text-stroke-width:0px;line-height:10px;color:#555">Код</div>
 <div class="a" style="left:302px;top:0;width:1px;height:10px;background:#dcdcdc"></div>
 <div class="t" style="left:304.1px;top:0.3px;font-size:5.8px;-webkit-text-stroke-width:0px;line-height:10px;color:#555">Артикул</div>
 <div class="a" style="left:350px;top:0;width:1px;height:10px;background:#dcdcdc"></div>
 <div class="t" style="left:352.1px;top:0.3px;font-size:5.8px;-webkit-text-stroke-width:0px;line-height:10px;color:#555">Ед.</div>
 <div class="a" style="left:365px;top:0;width:1px;height:10px;background:#dcdcdc"></div>
 <div class="t" style="left:367.1px;top:0.3px;font-size:5.8px;-webkit-text-stroke-width:0px;line-height:10px;color:#555">Остаток</div>
 <div class="a" style="left:414px;top:0;width:1px;height:10px;background:#dcdcdc"></div>
 <div class="t" style="left:416.1px;top:0.3px;font-size:5.8px;-webkit-text-stroke-width:0px;line-height:10px;color:#555">Счет уч...</div>
 <div class="t" style="left:406.5px;top:0px;font-size:6px;line-height:10px;color:#444">↑</div>
 <div class="a" style="left:0;top:11px;width:441px;height:10px;background:#f8f8f8;border-bottom:1px solid #ebebeb"></div>
 <div class="t" style="left:2px;top:11px;font-size:5.75px;-webkit-text-stroke-width:0px;line-height:10px;color:#484848">Йогурт Савушкин «Лёгкий» массовой долей жира 1,0 % с наполнителем «Вишня», ПЭТ-бутылк...</div>
 <div class="t" style="left:268px;top:11px;font-size:5.75px;-webkit-text-stroke-width:0px;line-height:10px;color:#484848">00-000000...</div>
 <div class="t" style="left:352.5px;top:11px;font-size:5.75px;-webkit-text-stroke-width:0px;line-height:10px;color:#484848">шт</div>
 <div class="t" style="left:401px;top:11px;font-size:5.75px;-webkit-text-stroke-width:0px;line-height:10px;color:#484848;width:11.5px;text-align:right">98</div>
 <div class="t" style="left:416.5px;top:11px;font-size:5.75px;-webkit-text-stroke-width:0px;line-height:10px;color:#484848">41.1</div>
 <div class="a" style="left:0;top:21px;width:441px;height:10px;background:#fff;border-bottom:1px solid #ebebeb"></div>
 <div class="t" style="left:2px;top:21px;font-size:5.75px;-webkit-text-stroke-width:0px;line-height:10px;color:#484848">Молоко питьевое ультрапастеризованное массовая доля жира 2,5 %, ПЭТ-бутылка (ТМ 'Бабуш...</div>
 <div class="t" style="left:268px;top:21px;font-size:5.75px;-webkit-text-stroke-width:0px;line-height:10px;color:#484848">00-000000...</div>
 <div class="t" style="left:352.5px;top:21px;font-size:5.75px;-webkit-text-stroke-width:0px;line-height:10px;color:#484848">шт</div>
 <div class="t" style="left:401px;top:21px;font-size:5.75px;-webkit-text-stroke-width:0px;line-height:10px;color:#484848;width:11.5px;text-align:right">94</div>
 <div class="t" style="left:416.5px;top:21px;font-size:5.75px;-webkit-text-stroke-width:0px;line-height:10px;color:#484848">41.1</div>
 <div class="a" style="left:0;top:31px;width:441px;height:10px;background:#fdf0c2;border-bottom:1px solid #ebebeb"></div>
 <div class="a" style="left:303px;top:31px;width:47px;height:9px;background:#fde38a"></div>
 <div class="a" style="left:265px;top:31px;width:1px;height:9px;background:#f6e7b6"></div>
 <div class="a" style="left:302px;top:31px;width:1px;height:9px;background:#f6e7b6"></div>
 <div class="a" style="left:350px;top:31px;width:1px;height:9px;background:#f6e7b6"></div>
 <div class="a" style="left:365px;top:31px;width:1px;height:9px;background:#f6e7b6"></div>
 <div class="a" style="left:414px;top:31px;width:1px;height:9px;background:#f6e7b6"></div>
 <div class="t" style="left:2px;top:31px;font-size:5.75px;-webkit-text-stroke-width:0px;line-height:10px;color:#484848">Молоко питьевое ультрапастеризованное Ясь Белоус массовая доля жира 2,5%, асептически...</div>
 <div class="t" style="left:268px;top:31px;font-size:5.75px;-webkit-text-stroke-width:0px;line-height:10px;color:#484848">00-000000...</div>
 <div class="t" style="left:352.5px;top:31px;font-size:5.75px;-webkit-text-stroke-width:0px;line-height:10px;color:#484848">шт</div>
 <div class="t" style="left:401px;top:31px;font-size:5.75px;-webkit-text-stroke-width:0px;line-height:10px;color:#484848;width:11.5px;text-align:right">94</div>
 <div class="t" style="left:416.5px;top:31px;font-size:5.75px;-webkit-text-stroke-width:0px;line-height:10px;color:#484848">41.1</div>
 <div class="a" style="left:0;top:41px;width:441px;height:10px;background:#fff;border-bottom:1px solid #ebebeb"></div>
 <div class="t" style="left:2px;top:41px;font-size:5.75px;-webkit-text-stroke-width:0px;line-height:10px;color:#484848">Кефир Брест-Литовск массовой долей жира 3,2 % ПЭТ, 950 г</div>
 <div class="t" style="left:268px;top:41px;font-size:5.75px;-webkit-text-stroke-width:0px;line-height:10px;color:#484848">00-000000...</div>
 <div class="t" style="left:352.5px;top:41px;font-size:5.75px;-webkit-text-stroke-width:0px;line-height:10px;color:#484848">шт</div>
 <div class="a" style="left:0;top:51px;width:441px;height:10px;background:#f8f8f8;border-bottom:1px solid #ebebeb"></div>
 <div class="t" style="left:2px;top:51px;font-size:5.75px;-webkit-text-stroke-width:0px;line-height:10px;color:#484848">Йогурт Савушкин «Лёгкий» массовой долей жира 1,0 % с наполнителем «Малина-земляника»,...</div>
 <div class="t" style="left:268px;top:51px;font-size:5.75px;-webkit-text-stroke-width:0px;line-height:10px;color:#484848">00-000000...</div>
 <div class="t" style="left:352.5px;top:51px;font-size:5.75px;-webkit-text-stroke-width:0px;line-height:10px;color:#484848">шт</div>
 <div class="a" style="left:0;top:61px;width:441px;height:10px;background:#fff;border-bottom:1px solid #ebebeb"></div>
 <div class="t" style="left:2px;top:61px;font-size:5.75px;-webkit-text-stroke-width:0px;line-height:10px;color:#484848">Сырок творожный Савушкин глазированный «Плюш» с ароматом ванили массовой долей жир...</div>
 <div class="t" style="left:268px;top:61px;font-size:5.75px;-webkit-text-stroke-width:0px;line-height:10px;color:#484848">00-000000...</div>
 <div class="t" style="left:352.5px;top:61px;font-size:5.75px;-webkit-text-stroke-width:0px;line-height:10px;color:#484848">шт</div>
 <div class="a" style="left:0;top:71px;width:441px;height:10px;background:#f8f8f8;border-bottom:1px solid #ebebeb"></div>
 <div class="t" style="left:2px;top:71px;font-size:5.75px;-webkit-text-stroke-width:0px;line-height:10px;color:#484848">Сырок творожный глазированный ТОП с начинкой «Клубника» массовой долей жира 20,0 %...</div>
 <div class="t" style="left:268px;top:71px;font-size:5.75px;-webkit-text-stroke-width:0px;line-height:10px;color:#484848">00-000000...</div>
 <div class="t" style="left:352.5px;top:71px;font-size:5.75px;-webkit-text-stroke-width:0px;line-height:10px;color:#484848">шт</div>
</div>
<div class="a" style="left:949px;top:298px;width:51px;height:12px;border:1px solid #d0d0d0;border-top:none;background:#fff"></div>
<div class="a" style="left:961px;top:298px;width:1px;height:11px;background:#d8d8d8"></div>
<div class="a" style="left:974px;top:298px;width:1px;height:11px;background:#d8d8d8"></div>
<div class="a" style="left:987px;top:298px;width:1px;height:11px;background:#d8d8d8"></div>
<svg class="a" style="left:949px;top:297px" width="52" height="13" viewBox="0 0 52 13">
 <path d="M4.2 4.5 H8.8 M6.5 5.2 L4.2 8 H8.8 Z" fill="#bbb" stroke="#bbb" stroke-width="0.6"/><path d="M17 8 L19.5 5.5 L22 8 Z" fill="#bbb"/><path d="M30 5.5 L32.6 8.3 L35.2 5.5 Z" fill="#333"/><path d="M42.8 4.8 H47.5 L45.15 7.5 Z M42.8 8.3 H47.5" fill="#333" stroke="#333" stroke-width="0.6"/>
</svg>
<div class="a" style="left:420px;top:314px;width:580px;height:0;border-top:1px dotted #d8d8d8"></div>

<!-- partii -->
<div class="t" style="left:419.8px;top:314.6px;font-size:6.4px;font-weight:700;line-height:10px;color:#333">Партии выбранного товара:</div>
<div class="a" style="left:419px;top:326px;width:582px;height:75px;border:1px solid #cbcbcb;background:#fff"></div>
<div class="a" style="left:420px;top:327px;width:580px;height:11px;background:#f2f2f2;border-bottom:1px solid #dedede"></div>
<div class="a" style="left:584px;top:327px;width:1px;height:10px;background:#dcdcdc"></div>
<div class="a" style="left:824px;top:327px;width:1px;height:10px;background:#dcdcdc"></div>
<div class="a" style="left:871px;top:327px;width:1px;height:10px;background:#dcdcdc"></div>
<div class="a" style="left:919px;top:327px;width:1px;height:10px;background:#dcdcdc"></div>
<div class="t" style="left:422.5px;top:327px;font-size:5.8px;-webkit-text-stroke-width:0px;line-height:10px;color:#555">Партия</div>
<div class="t" style="left:587px;top:327px;font-size:5.8px;-webkit-text-stroke-width:0px;line-height:10px;color:#555">Документ</div>
<div class="t" style="left:827px;top:327px;font-size:5.8px;-webkit-text-stroke-width:0px;line-height:10px;color:#555">Остаток</div>
<div class="t" style="left:874px;top:327px;font-size:5.8px;-webkit-text-stroke-width:0px;line-height:10px;color:#555">Себестоимость</div>
<div class="t" style="left:922px;top:327px;font-size:5.8px;-webkit-text-stroke-width:0px;line-height:10px;color:#555">Цена</div>
<div class="a" style="left:420px;top:338px;width:580px;height:10px;background:#fdf0c2;border-bottom:1px solid #f1e7c9"></div>
<div class="a" style="left:585px;top:338px;width:239px;height:9px;background:#fde38a"></div>
<div class="a" style="left:824px;top:338px;width:1px;height:9px;background:#f3e5b5"></div>
<div class="a" style="left:871px;top:338px;width:1px;height:9px;background:#f3e5b5"></div>
<div class="a" style="left:919px;top:338px;width:1px;height:9px;background:#f3e5b5"></div>
<div class="t" style="left:422.5px;top:337.6px;font-size:5.75px;-webkit-text-stroke-width:0px;line-height:10px;color:#484848">Партия 0000-000154 от 14.10.2025 12:00:00</div>
<div class="t" style="left:587px;top:337.6px;font-size:5.75px;-webkit-text-stroke-width:0px;line-height:10px;color:#484848">№00036 от 14.10.2025</div>
<div class="t" style="left:848px;top:337.6px;font-size:5.75px;-webkit-text-stroke-width:0px;line-height:10px;color:#484848;width:22px;text-align:right">94</div>
<div class="t" style="left:890px;top:337.6px;font-size:5.75px;-webkit-text-stroke-width:0px;line-height:10px;color:#484848;width:27.5px;text-align:right">1,00</div>

<!-- vybrannye -->
<div class="t" style="left:420.3px;top:403px;font-size:6.1px;font-weight:700;line-height:10px;color:#333">Выбранные партии:</div>
<div class="a" style="left:420px;top:414px;width:581px;height:56px;border:1px solid #cbcbcb;background:#fff"></div>
<div class="a" style="left:421px;top:415px;width:579px;height:11px;background:#f2f2f2;border-bottom:1px solid #dedede"></div>
<div class="a" style="left:531px;top:415px;width:1px;height:10px;background:#dcdcdc"></div>
<div class="a" style="left:607px;top:415px;width:1px;height:10px;background:#dcdcdc"></div>
<div class="a" style="left:688px;top:415px;width:1px;height:10px;background:#dcdcdc"></div>
<div class="a" style="left:768px;top:415px;width:1px;height:10px;background:#dcdcdc"></div>
<div class="t" style="left:423px;top:415.3px;font-size:5.8px;-webkit-text-stroke-width:0px;line-height:10px;color:#555">Номенклатура</div>
<div class="t" style="left:534px;top:415.3px;font-size:5.8px;-webkit-text-stroke-width:0px;line-height:10px;color:#555">Количество</div>
<div class="t" style="left:610px;top:415.3px;font-size:5.8px;-webkit-text-stroke-width:0px;line-height:10px;color:#555">Себестоимость</div>
<div class="t" style="left:691px;top:415.3px;font-size:5.8px;-webkit-text-stroke-width:0px;line-height:10px;color:#555">Цена</div>
<div class="t" style="left:771px;top:415.3px;font-size:5.8px;-webkit-text-stroke-width:0px;line-height:10px;color:#555">Партия</div>
<div class="a" style="left:421px;top:426px;width:579px;height:10px;background:#fdf0c2;border-bottom:1px solid #f1e7c9"></div>
<div class="a" style="left:531px;top:425px;width:77px;height:11px;background:#fde38a;border:1px solid #f2c94c"></div>
<div class="a" style="left:688px;top:426px;width:1px;height:9px;background:#f3e5b5"></div>
<div class="a" style="left:768px;top:426px;width:1px;height:9px;background:#f3e5b5"></div>
<div class="t" style="left:423px;top:425.6px;font-size:5.75px;-webkit-text-stroke-width:0px;line-height:10px;color:#484848">Молоко питьевое ультрапастеризова...</div>
<div class="t" style="left:570px;top:425.6px;font-size:5.75px;-webkit-text-stroke-width:0px;line-height:10px;color:#484848;width:35.5px;text-align:right">1,000</div>
<div class="t" style="left:650px;top:425.6px;font-size:5.75px;-webkit-text-stroke-width:0px;line-height:10px;color:#484848;width:35.5px;text-align:right">1,00</div>
<div class="t" style="left:771px;top:425.6px;font-size:5.75px;-webkit-text-stroke-width:0px;line-height:10px;color:#484848">Партия 0000-000154 от 14.10.2025 12:00:00</div>

<!-- bottom checkboxes -->
<div class="t" style="left:420px;top:474.2px;font-size:5.7px;-webkit-text-stroke-width:0px;line-height:10px;color:#666">Автоподбор партий:</div>
<div class="a" style="left:476px;top:475px;width:8px;height:8px;border:0.8px solid #b5b5b5;border-radius:1px"></div>
<div class="t" style="left:487.7px;top:474.2px;font-size:5.8px;-webkit-text-stroke-width:0px;line-height:10px;color:#666">Отображать сроки годности:</div>
<div class="a" style="left:569px;top:475px;width:7px;height:8px;border:0.8px solid #b5b5b5;border-radius:1px"></div>
<div class="t" style="left:580.6px;top:474.2px;font-size:5.8px;-webkit-text-stroke-width:0px;line-height:10px;color:#666">Отображать транспортные расходы:</div>
<div class="a" style="left:683px;top:475px;width:7px;height:8px;border:0.8px solid #b5b5b5;border-radius:1px"></div>
<div class="t" style="left:693.7px;top:474.2px;font-size:5.8px;-webkit-text-stroke-width:0px;line-height:10px;color:#666">Отображать изображения:</div>
<div class="a" style="left:769px;top:475px;width:8px;height:8px;border:0.8px solid #b5b5b5;border-radius:1px"></div>
<div class="btn" style="left:920px;top:473px;width:41px;height:12px;line-height:8.7px;font-size:5.9px;-webkit-text-stroke-width:0px;font-weight:700;color:#333;background:linear-gradient(#f9da12,#f3d000);border:1.9px solid #e23c33"></div>
<div class="t" style="left:926.8px;top:473.9px;font-size:5.9px;-webkit-text-stroke-width:0px;font-weight:700;line-height:10px;color:#333">Выбрать</div>
<div class="btn" style="left:962px;top:473px;width:39px;height:12px;line-height:8.9px;font-size:5.8px;-webkit-text-stroke-width:0px;color:#555">Отмена</div>

<!-- RED ARROW -->
<svg class="a" style="left:300px;top:155px" width="50" height="50" viewBox="300 155 50 50">
 <path d="M334.4 162.8 L319.5 186" stroke="#e3392e" stroke-width="1.9" stroke-linecap="round"/>
 <path d="M311.3 197.6 L313.1 182.4 L325.2 190 Z" fill="#e3392e"/>
</svg>
</body></html>
